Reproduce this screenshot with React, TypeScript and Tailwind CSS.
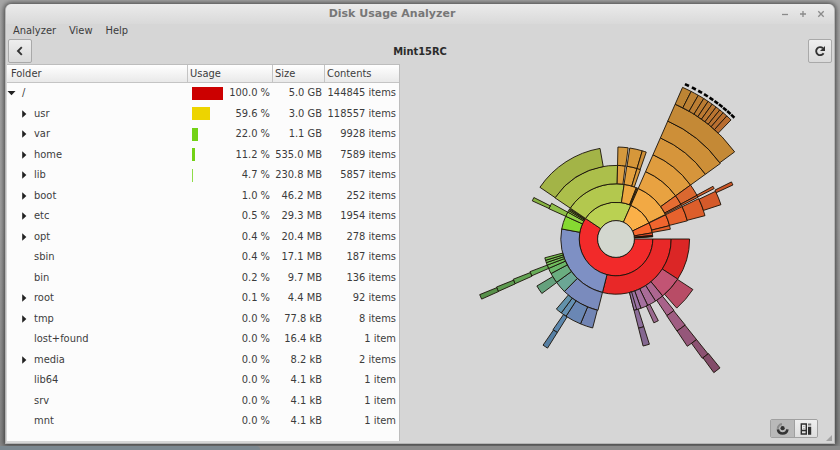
import { useState } from "react";

type Folder = {
  name: string;
  percent: string;
  size: string;
  contents: string;
  expandable?: boolean;
  bar?: string;
};

const folders: Folder[] = [
  { name: "/", percent: "100.0", size: "5.0 GB", contents: "144845 items", expandable: true, bar: "w-[31px] bg-[#cc0000]" },
  { name: "usr", percent: "59.6", size: "3.0 GB", contents: "118557 items", expandable: true, bar: "w-[18px] bg-[#edd400]" },
  { name: "var", percent: "22.0", size: "1.1 GB", contents: "9928 items", expandable: true, bar: "w-[6px] bg-[#73d216]" },
  { name: "home", percent: "11.2", size: "535.0 MB", contents: "7589 items", expandable: true, bar: "w-[3px] bg-[#73d216]" },
  { name: "lib", percent: "4.7", size: "230.8 MB", contents: "5857 items", expandable: true, bar: "w-px bg-[#8fdc48]" },
  { name: "boot", percent: "1.0", size: "46.2 MB", contents: "252 items", expandable: true },
  { name: "etc", percent: "0.5", size: "29.3 MB", contents: "1954 items", expandable: true },
  { name: "opt", percent: "0.4", size: "20.4 MB", contents: "278 items", expandable: true },
  { name: "sbin", percent: "0.4", size: "17.1 MB", contents: "187 items" },
  { name: "bin", percent: "0.2", size: "9.7 MB", contents: "136 items" },
  { name: "root", percent: "0.1", size: "4.4 MB", contents: "92 items", expandable: true },
  { name: "tmp", percent: "0.0", size: "77.8 kB", contents: "8 items", expandable: true },
  { name: "lost+found", percent: "0.0", size: "16.4 kB", contents: "1 item" },
  { name: "media", percent: "0.0", size: "8.2 kB", contents: "2 items", expandable: true },
  { name: "lib64", percent: "0.0", size: "4.1 kB", contents: "1 item" },
  { name: "srv", percent: "0.0", size: "4.1 kB", contents: "1 item" },
  { name: "mnt", percent: "0.0", size: "4.1 kB", contents: "1 item" },
];

const RING = 18.4;

// [ring, start angle, end angle, fill]; angles run clockwise from three o'clock
const slices: [number, number, number, string][] = [
  // usr
  [1, 0, 214, "#f22a2a"],
  [2, 0, 104.2, "#e82828"],
  [3, 0, 33, "#db2626"],
  [3, 33, 50.7, "#c25474"],
  [4, 33.3, 48.7, "#b84c66"],
  [3, 50.7, 57.5, "#ad6690"],
  [4, 50.9, 56.4, "#a8628a"],
  [5, 51.2, 56.5, "#9f5d82"],
  [6, 51.3, 56.4, "#95577a"],
  [7, 51.3, 54.1, "#8c5272"],
  [8, 51.1, 53.8, "#834c69"],
  [3, 57.5, 64.5, "#a96c98"],
  [3, 64.5, 70.2, "#a4709f"],
  [4, 62.6, 65.7, "#99698f"],
  [3, 70.2, 75.8, "#9b73a4"],
  [3, 73.6, 75.8, "#9676a6"],
  [4, 72.4, 75.8, "#8c6e9b"],
  [5, 72.4, 75.8, "#846891"],
  [2, 104.2, 190.5, "#7e90c4"],
  [3, 104.2, 134.5, "#7a8bbd"],
  [4, 104.7, 112.7, "#7285b4"],
  [4, 112.7, 122.9, "#6a87b4"],
  [4, 122.9, 126.5, "#6490b2"],
  [4, 126.5, 130.4, "#6292ab"],
  [5, 122.1, 124.8, "#5c87ad"],
  [6, 122.1, 124.5, "#567fa3"],
  [3, 134.5, 143.9, "#6ba695"],
  [3, 143.9, 152, "#6aae80"],
  [4, 143.7, 149.3, "#65a17d"],
  [3, 152, 156.4, "#6ab768"],
  [3, 156.4, 159.2, "#6fbd5c"],
  [3, 159.2, 161.3, "#72bf5a"],
  [3, 161.3, 163.2, "#74c156"],
  [3, 163.2, 165.2, "#76c352"],
  [4, 156.4, 159.2, "#67ad58"],
  [5, 156.1, 158.6, "#62a354"],
  [6, 156, 158.1, "#5d9a50"],
  [7, 155.9, 157.8, "#58914b"],
  [2, 190.5, 204.3, "#86da32"],
  [2, 204.3, 209.2, "#92cf48"],
  [3, 204.3, 209, "#8ebf48"],
  [4, 204.5, 206.8, "#86b343"],
  [2, 209.2, 211, "#98ca4a"],
  [2, 211, 212.4, "#8cb347"],
  [2, 212.4, 213.4, "#84a344"],
  // var
  [1, 214, 293.8, "#bad152"],
  [2, 214, 278.5, "#b3c84e"],
  [3, 214, 271.2, "#acbf4b"],
  [4, 214.2, 260, "#a3b447"],
  [2, 278.5, 291.6, "#eda741"],
  [2, 291.6, 292.6, "#dfa040"],
  [2, 292.6, 293.7, "#dfa040"],
  [3, 271.2, 277.2, "#dfa040"],
  [3, 278.4, 286.6, "#e3a03e"],
  [3, 286.6, 289.4, "#d9983b"],
  [4, 271.2, 277.6, "#d4993e"],
  [4, 278.6, 286.6, "#d6973a"],
  [4, 286.6, 289.2, "#cd8f38"],
  // home
  [1, 293.8, 334.1, "#fbb048"],
  [2, 293.8, 333.6, "#f2a944"],
  [3, 293.7, 324.1, "#e8a241"],
  [4, 293.7, 324.1, "#df9c3e"],
  [5, 293.7, 324.1, "#d6953b"],
  [6, 293.7, 324.1, "#cd8f38"],
  [7, 293.7, 323.7, "#c48936"],
  [8, 293.7, 297, "#bd8434"],
  [8, 297, 299.8, "#bc8133"],
  [8, 299.8, 302, "#bc7e33"],
  [8, 302, 303.8, "#bb7c33"],
  [8, 303.8, 305.5, "#bb7932"],
  [8, 305.5, 307.2, "#ba7732"],
  [8, 307.2, 308.8, "#ba7431"],
  [8, 308.8, 310.3, "#b97231"],
  [8, 310.3, 312, "#b96f31"],
  [8, 312, 314, "#b86c30"],
  [3, 324.1, 331.9, "#e56c32"],
  [4, 324.1, 331.7, "#db6830"],
  [3, 331.9, 333, "#e0642f"],
  [4, 331.7, 333, "#d6602d"],
  [5, 331.5, 332.8, "#cf5e2c"],
  // lib
  [1, 334.1, 350.3, "#f9692f"],
  [2, 334.1, 346, "#f0652e"],
  [2, 346, 349.8, "#e3602c"],
  [3, 333.9, 345.7, "#e6622d"],
  [4, 334, 345.3, "#dc5e2b"],
  [5, 334.4, 341.9, "#d45a2a"],
  [6, 333.7, 335.2, "#cb5628"],
  [1, 350.3, 354.4, "#ea4f2e"],
  [1, 354.4, 355.8, "#c9402a"],
  [1, 355.8, 356.6, "#8f3024"],
];

// folders too deep to draw are marked by ticks along the rim
const deeper = [295, 297.6, 300, 302.3, 304.5, 306.5, 308.4, 310.2, 312, 313.8];

function point(radius: number, degrees: number) {
  const a = (degrees * Math.PI) / 180;
  return `${(radius * Math.cos(a)).toFixed(2)} ${(radius * Math.sin(a)).toFixed(2)}`;
}

function slicePath(ring: number, start: number, end: number) {
  const inner = ring * RING;
  const outer = inner + RING;
  const large = end - start > 180 ? 1 : 0;
  return `M${point(inner, start)}L${point(outer, start)}A${outer} ${outer} 0 ${large} 1 ${point(outer, end)}L${point(inner, end)}A${inner} ${inner} 0 ${large} 0 ${point(inner, start)}Z`;
}

function RingsChart() {
  return (
    <svg className="size-[340px] max-w-full" viewBox="-170 -170 340 340" overflow="visible" role="img" aria-label="Rings chart">
      {slices.map(([ring, start, end, fill], i) => (
        <path key={i} d={slicePath(ring, start, end)} fill={fill} stroke="#1a1208" strokeWidth="0.9" />
      ))}
      <circle r={RING} fill="#d3d7cf" stroke="#1a1208" strokeWidth="0.9" />
      {deeper.map((a) => (
        <path key={a} d={`M${point(169.5, a - 1)}L${point(169.5, a + 0.5)}`} stroke="#000" strokeWidth="2.6" />
      ))}
    </svg>
  );
}

function TitleBar() {
  return (
    <div className="grid h-5 grid-cols-[1fr_auto_1fr] items-center rounded-t-md bg-linear-to-b from-[#ebebeb] to-[#d9d9d9] pr-2">
      <h1 className="col-start-2 pr-12 font-['DejaVu_Sans',sans-serif] text-[11px] leading-5 font-bold text-[#777]">
        Disk Usage Analyzer
      </h1>
      <div className="flex justify-end gap-2 text-[#8a8a8a]">
        <button type="button" aria-label="Minimize" className="size-[10px]">
          <svg viewBox="0 0 10 10" stroke="currentColor" strokeWidth="1.3"><path d="M2 5.5h6" /></svg>
        </button>
        <button type="button" aria-label="Maximize" className="size-[10px]">
          <svg viewBox="0 0 10 10" stroke="currentColor" strokeWidth="1.3"><path d="M2 5h6M5 2v6" /></svg>
        </button>
        <button type="button" aria-label="Close" className="size-[10px]">
          <svg viewBox="0 0 10 10" stroke="currentColor" strokeWidth="1.3"><path d="M2.3 2.3l5.4 5.4M7.7 2.3L2.3 7.7" /></svg>
        </button>
      </div>
    </div>
  );
}

function MenuBar() {
  return (
    <nav className="flex h-[15px] items-start gap-[13px] px-[7px]">
      <button type="button" className="leading-[14px]">Analyzer</button>
      <button type="button" className="leading-[14px]">View</button>
      <button type="button" className="leading-[14px]">Help</button>
    </nav>
  );
}

function Toolbar() {
  const box = "flex size-6 items-center justify-center rounded-[2px] border border-[#a9a9a9] bg-linear-to-b from-[#eeeeee] to-[#dadada]";
  return (
    <div className="grid h-[25px] grid-cols-[1fr_auto_1fr] items-start px-[2px]">
      <button type="button" aria-label="Back" className={box}>
        <svg className="size-3" viewBox="0 0 12 12" fill="none" stroke="#333" strokeWidth="1.9">
          <path d="M7.8 2.2L4 6l3.8 3.8" />
        </svg>
      </button>
      <h2 className="text-[11px] leading-[26px] font-bold text-[#2b2b2b]">Mint15RC</h2>
      <button type="button" aria-label="Reload" className={`${box} justify-self-end`}>
        <svg className="size-3" viewBox="0 0 12 12" fill="none">
          <path d="M9.6 8.2A4 4 0 1 1 8.9 3.2" stroke="#333" strokeWidth="1.9" />
          <path d="M11 1v5H6z" fill="#333" />
        </svg>
      </button>
    </div>
  );
}

function FolderTable() {
  const head = "h-[18px] border-b border-l border-[#c4c4c4] bg-linear-to-b from-white to-[#e9e9e9] p-0 pl-[2px] text-left font-normal first:border-l-0 first:pl-1";
  return (
    <div className="w-[393px] shrink-0 border-t border-r border-[#bdbdbd] bg-[#fcfcfc]">
      <table className="w-full table-fixed border-separate border-spacing-0 leading-4">
        <colgroup>
          <col />
          <col className="w-[85px]" />
          <col className="w-[52px]" />
          <col className="w-[75px]" />
        </colgroup>
        <thead>
          <tr>
            <th className={head}>Folder</th>
            <th className={head}>Usage</th>
            <th className={head}>Size</th>
            <th className={head}>Contents</th>
          </tr>
        </thead>
        <tbody>
          {folders.map((folder, i) => (
            <tr key={folder.name} className="h-5 even:h-[21px]">
              <td className="p-0">
                <div className={i === 0 ? "flex items-center gap-[5px]" : "flex items-center gap-[5px] pl-3"}>
                  {folder.expandable ? (
                    <button type="button" aria-label={`Toggle ${folder.name}`} className="size-[10px]">
                      <svg viewBox="0 0 10 10" fill="#222">
                        <path d={i === 0 ? "M0.5 3h8L4.5 7.2z" : "M3.2 1.2v7.6L7.4 5z"} />
                      </svg>
                    </button>
                  ) : (
                    <span className="size-[10px]" />
                  )}
                  <span>{folder.name}</span>
                </div>
              </td>
              <td className="p-0 pr-[2px] pl-[5px]">
                <div className="flex items-center justify-between">
                  <span className={`h-[13px] ${folder.bar ?? ""}`} />
                  <span>{folder.percent} %</span>
                </div>
              </td>
              <td className="p-0 pr-[2px] text-right whitespace-nowrap">{folder.size}</td>
              <td className="p-0 pr-[3px] text-right whitespace-nowrap">{folder.contents}</td>
            </tr>
          ))}
        </tbody>
      </table>
    </div>
  );
}

function ViewSwitch() {
  const [view, setView] = useState("rings");
  const on = "bg-[#b9b9b9]";
  const off = "bg-linear-to-b from-[#efefef] to-[#dedede]";
  return (
    <div className="flex h-[30px] items-start justify-end gap-2 pt-[6px] pr-[2px]">
      <div className="flex h-[19px] overflow-hidden rounded-[2px] border border-[#a0a0a0]">
        <button
          type="button"
          aria-label="Rings chart"
          aria-pressed={view === "rings"}
          onClick={() => setView("rings")}
          className={`flex w-6 items-center justify-center border-r border-[#a0a0a0] ${view === "rings" ? on : off}`}
        >
          <svg className="size-[13px]" viewBox="0 0 13 13" fill="none">
            <path d="M6 2.2A4.6 4.6 0 0 0 1.8 6.8" stroke="#8b8b8b" strokeWidth="2.2" />
            <path d="M1.9 7.4A4.8 4.8 0 0 0 11.4 7.4" stroke="#333" strokeWidth="2.6" />
            <circle cx="6.6" cy="6.2" r="2.1" fill="#333" />
          </svg>
        </button>
        <button
          type="button"
          aria-label="Treemap chart"
          aria-pressed={view === "treemap"}
          onClick={() => setView("treemap")}
          className={`flex w-[22px] items-center justify-center ${view === "treemap" ? on : off}`}
        >
          <svg className="size-3" viewBox="0 0 12 12" fill="none">
            <path d="M1.3 1h5v10h-5zM1.3 7.5h5" stroke="#2e2e2e" strokeWidth="1.4" />
            <path d="M3.2 3.5h1.4M3.2 5.5h1.4" stroke="#999" strokeWidth="0.8" />
            <path d="M8 3.8h3.2v8H8z" fill="#2e2e2e" />
            <path d="M8 .6h3.2v2H8z" fill="#777" />
          </svg>
        </button>
      </div>
      <svg className="mt-4 size-[6px]" viewBox="0 0 6 6" fill="#a2a2a2">
        <path d="M6 0v6H0z" />
      </svg>
    </div>
  );
}

export default function App() {
  return (
    <div className="flex min-h-screen flex-col bg-linear-to-b from-[#a5a5a5] via-[#a0a0a0] to-[#858585] pt-1 font-['DejaVu_Sans_Condensed','DejaVu_Sans',sans-serif] text-[11px] text-[#3c3c3c]">
      <div className="mx-[5px] flex flex-1 flex-col rounded-t-md border-x border-b border-[#b5b5b5] bg-[#d6d6d6] shadow-[0_0_5px_1px_rgba(0,0,0,0.6)]">
        <TitleBar />
        <MenuBar />
        <Toolbar />
        <main className="flex flex-1">
          <div className="flex pb-[2px] pl-px">
            <FolderTable />
          </div>
          <section className="flex min-w-0 flex-1 flex-col">
            <div className="flex flex-1 items-center justify-center pr-[2px]">
              <RingsChart />
            </div>
            <ViewSwitch />
          </section>
        </main>
      </div>
      <div className="mt-[2px] flex h-1 bg-[#8b8b8b]">
        <div className="w-[31%] rounded-tr-sm bg-[#7c8890]" />
      </div>
    </div>
  );
}
